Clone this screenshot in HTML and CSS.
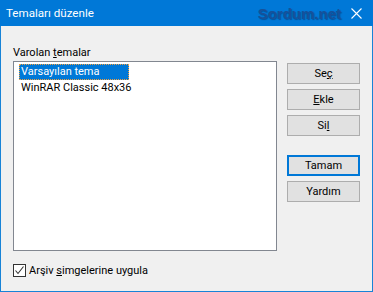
FILE: index.html
```html
<!DOCTYPE html>
<html lang="tr">
<head>
<meta charset="utf-8">
<title>Temaları düzenle</title>
<link rel="stylesheet" href="styles.css">
</head>
<body>
<div class="window">
  <div class="titlebar">
    <span class="title">Temaları düzenle</span>
    <span class="brand">Sordum.net</span>
    <span class="close">
      <svg width="11" height="11" viewBox="0 0 11 11"><path d="M0.5 0.5 L10.5 10.5 M10.5 0.5 L0.5 10.5" stroke="#fff" stroke-width="1.1" fill="none"/></svg>
    </span>
  </div>
  <div class="content">
    <div class="main">
      <div class="left">
        <div class="label">Varolan <u>t</u>emalar</div>
        <div class="listbox">
          <div class="item"><span class="cell selected">Varsayılan tema</span></div>
          <div class="item"><span class="cell">WinRAR Classic 48x36</span></div>
        </div>
      </div>
      <div class="buttons">
        <div class="btn">Se<u>ç</u></div>
        <div class="btn"><u>E</u>kle</div>
        <div class="btn">Si<u>l</u></div>
        <div class="btn default">Tamam</div>
        <div class="btn">Yardım</div>
      </div>
    </div>
    <div class="check-row">
      <span class="checkbox">
        <svg width="11" height="11" viewBox="0 0 11 11"><path d="M1.5 5.5 L4 8.5 L9.5 1.5" stroke="#333" stroke-width="1.1" fill="none"/></svg>
      </span>
      <span class="check-label">Arşiv <u>s</u>imgelerine uygula</span>
    </div>
  </div>
</div>
</body>
</html>
```

FILE: styles.css
```css
html, body {
  margin: 0;
  padding: 0;
  background: #f0f0f0;
}
.window {
  width: 373px;
  height: 292px;
  box-sizing: border-box;
  border: 1px solid #1883d7;
  border-top: 0;
  background: #f0f0f0;
  display: flex;
  flex-direction: column;
  font-family: Roboto, "Noto Sans", sans-serif;
  font-size: 11px;
  color: #000;
}
.titlebar {
  height: 26px;
  background: #0078d7;
  margin: 0 -1px;
  display: flex;
  align-items: center;
  color: #fff;
  flex-shrink: 0;
}
.title {
  margin-left: 6px;
  font-size: 11.6px;
  line-height: 16px;
  flex: 1;
}
.brand {
  font-family: "Liberation Sans", Arial, sans-serif;
  font-weight: bold;
  font-size: 15px;
  color: #16519a;
  text-shadow: 1px 1px 1px rgba(0, 40, 90, 0.45);
  margin-right: 10px;
}
.close {
  width: 11px;
  height: 11px;
  margin-right: 11px;
  display: flex;
}
.content {
  flex: 1;
  display: flex;
  flex-direction: column;
  padding: 19px 12px 0 12px;
}
.main {
  display: flex;
  gap: 10px;
}
.left {
  display: flex;
  flex-direction: column;
}
.label {
  line-height: 15px;
  margin-bottom: 1px;
}
.listbox {
  width: 264px;
  height: 190px;
  box-sizing: border-box;
  border: 1px solid #828790;
  background: #fff;
  padding: 2px 5px;
}
.item {
  height: 16px;
  line-height: 16px;
}
.cell {
  display: inline-block;
  width: 110px;
  height: 16px;
  box-sizing: border-box;
  padding-left: 2px;
  white-space: nowrap;
}
.selected {
  background: #0078d7;
  color: #fff;
  outline: 1px dotted #f0a040;
  outline-offset: -1px;
}
.buttons {
  display: flex;
  flex-direction: column;
  gap: 5px;
  padding-top: 18px;
}
.btn {
  width: 73px;
  height: 21px;
  box-sizing: border-box;
  border: 1px solid #adadad;
  background: #e1e1e1;
  display: flex;
  align-items: center;
  justify-content: center;
  line-height: 15px;
}
.btn.default {
  border: 2px solid #0078d7;
  margin-top: 14px;
}
.check-row {
  display: flex;
  align-items: center;
  margin-top: 12px;
  height: 14px;
}
.checkbox {
  width: 13px;
  height: 13px;
  box-sizing: border-box;
  border: 1px solid #333;
  background: #fff;
  display: flex;
  align-items: center;
  justify-content: center;
  margin-right: 3px;
}
.check-label {
  line-height: 15px;
}
```
